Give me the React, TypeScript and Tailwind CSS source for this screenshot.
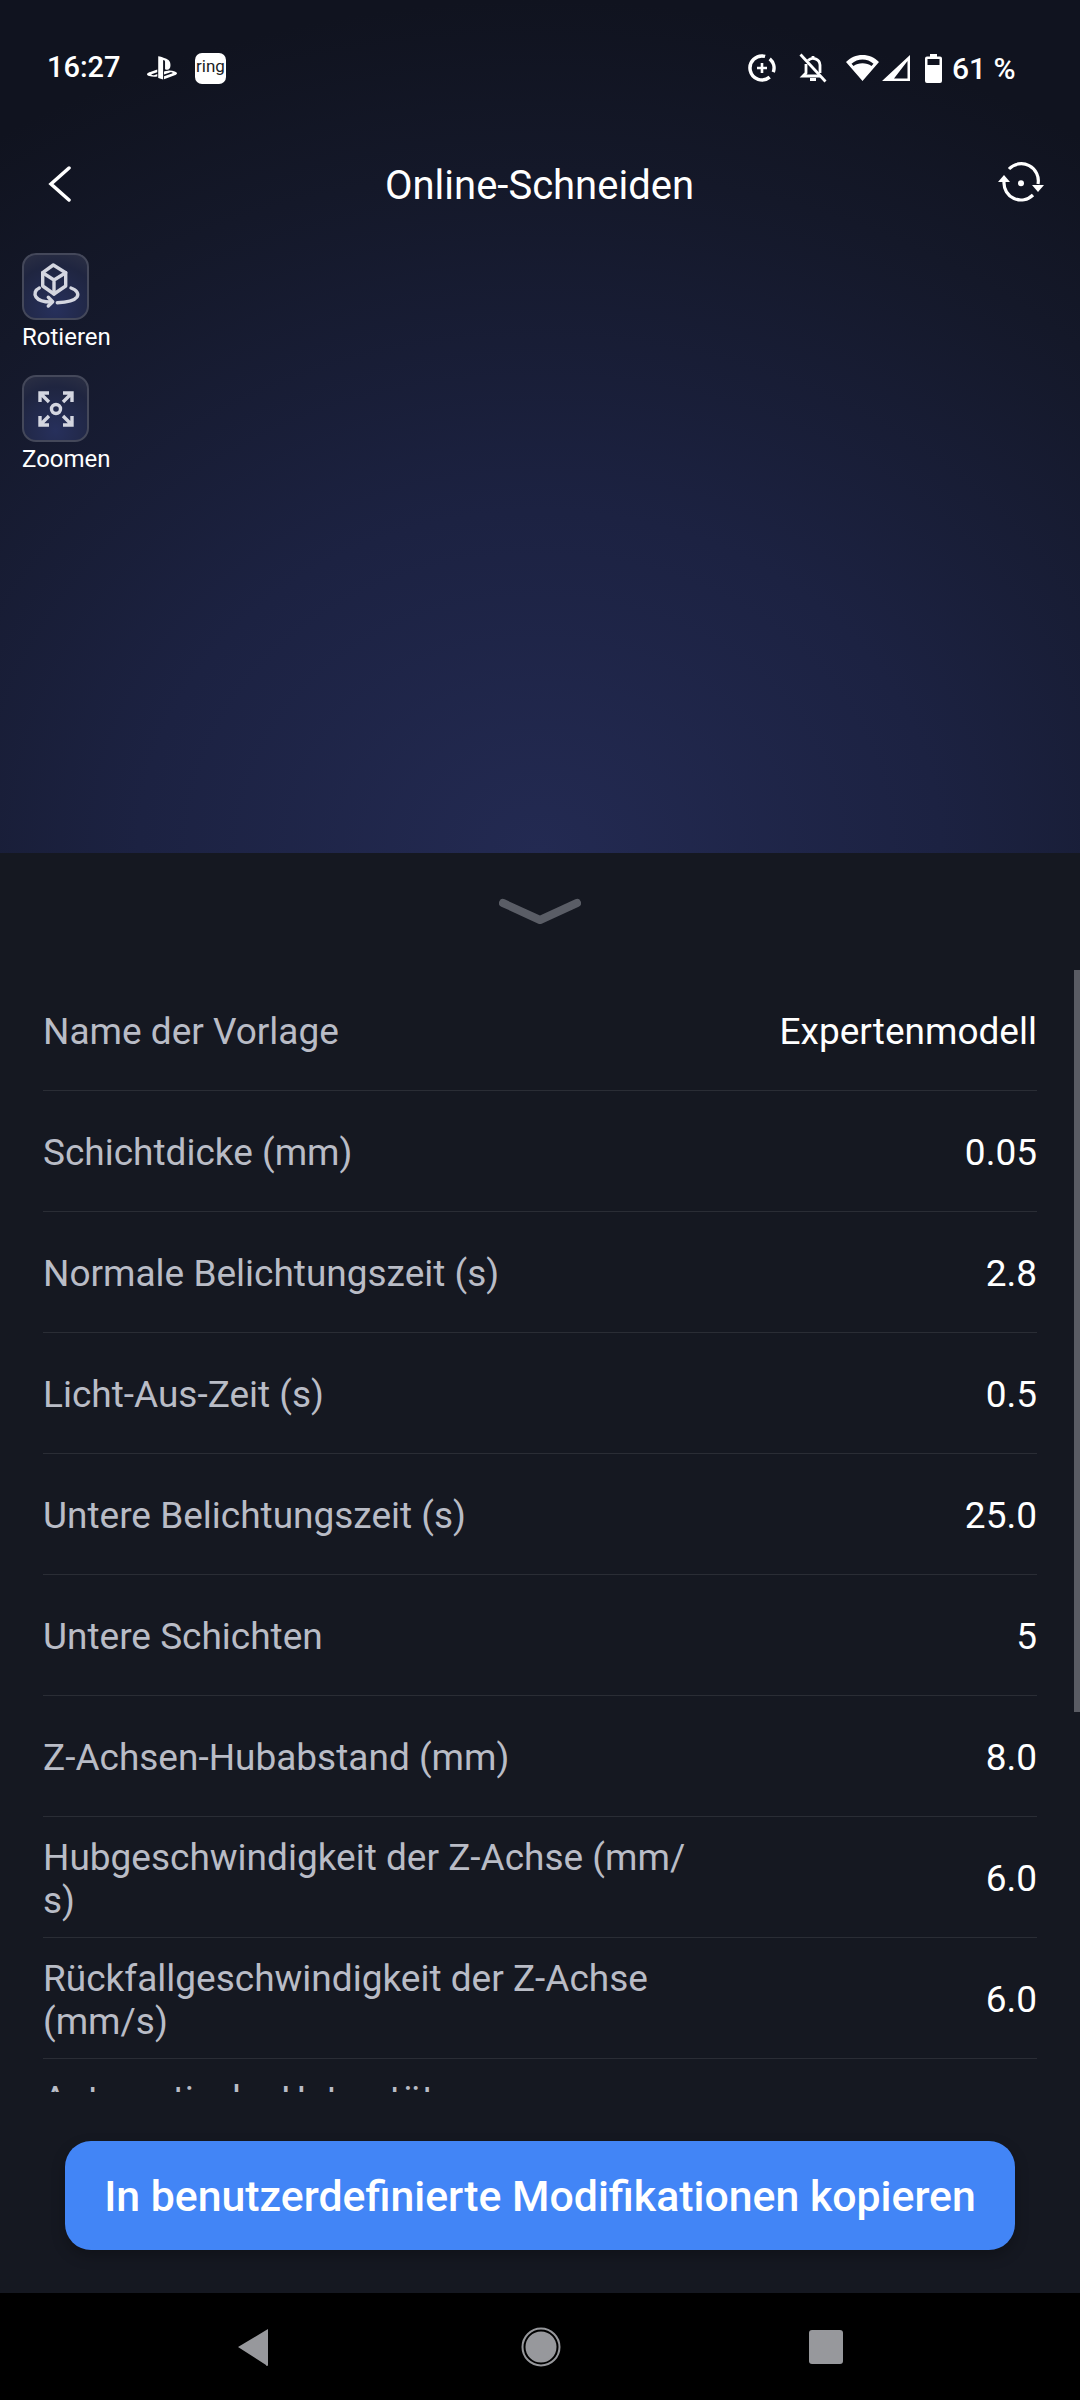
import { FaPlaystation } from 'react-icons/fa';

const ROWS = [
  { label: 'Name der Vorlage', value: 'Expertenmodell' },
  { label: 'Schichtdicke (mm)', value: '0.05' },
  { label: 'Normale Belichtungszeit (s)', value: '2.8' },
  { label: 'Licht-Aus-Zeit (s)', value: '0.5' },
  { label: 'Untere Belichtungszeit (s)', value: '25.0' },
  { label: 'Untere Schichten', value: '5' },
  { label: 'Z-Achsen-Hubabstand (mm)', value: '8.0' },
  { label: 'Hubgeschwindigkeit der Z-Achse (mm/\u200Bs)', value: '6.0' },
  { label: 'Rückfallgeschwindigkeit der Z-Achse (mm/s)', value: '6.0' },
  { label: 'Automatische Unterstützung\ngenerieren', value: '' },
];

function StatusBar() {
  return (
    <div className="h-[136px] pl-[47px] pr-[67px] flex items-center text-white">
      <span className="text-[29px] font-medium w-[100px]">16:27</span>
      <FaPlaystation className="w-[30px] h-[30px]" />
      <div className="ml-[18px] w-[31px] h-[31px] rounded-[7px] bg-white flex items-center justify-center text-[#1a1c24] text-[17px] leading-none pb-[3px]">
        ring
      </div>
      <div className="flex-1" />
      <svg width="28" height="28" viewBox="0 0 28 28" fill="none" stroke="white" strokeWidth="3.5">
        <path d="M17.100 2.400A12 12 0 1 0 21.700 23.200" />
        <path d="M21.700 4.800A12 12 0 0 1 25.300 18.100" />
        <path d="M14 9v10M9 14h10" strokeWidth="2.6" />
      </svg>
      <svg className="ml-[23px]" width="28" height="30" viewBox="0 0 28 30" fill="none" stroke="white" strokeWidth="2.8">
        <path d="M9 7.500A7 7 0 0 1 21 12v8M7 11v9l-3 3h17" />
        <path d="M11 26.500h6M14 3v2.500" />
        <path d="M1.500 1.500l25 27" />
      </svg>
      <svg className="ml-[19px]" width="33" height="26" viewBox="0 0 33 26" fill="white">
        <path fillRule="evenodd" d="M16.500 0C10 0 4.500 2.500 0 7l16.500 19L33 7C28.500 2.500 23 0 16.500 0Zm0 4.500c-4 0-8 1.400-11 4.300l2 2.300c2.500-1.800 5.600-2.800 9-2.800s6.500 1 9 2.800l2-2.300c-3-2.900-7-4.300-11-4.300Z" />
      </svg>
      <svg className="ml-[3px]" width="28" height="26" viewBox="0 0 28 26" fill="white">
        <path fillRule="evenodd" d="M28 0v26H0ZM25.500 6 12 23.500h13.500Z" />
      </svg>
      <svg className="ml-[15px]" width="17" height="29" viewBox="0 0 17 29" fill="white">
        <path fillRule="evenodd" d="M5 0h7v2.500h3A2 2 0 0 1 17 4.500V27a2 2 0 0 1-2 2H2a2 2 0 0 1-2-2V4.500a2 2 0 0 1 2-2h3ZM2.500 5v6h12V5Z" />
      </svg>
      <span className="ml-[10px] text-[30px] font-medium w-[61px] whitespace-nowrap">61 %</span>
    </div>
  );
}

function ToolButton({ label, children }: { label: string; children: React.ReactNode }) {
  return (
    <div className="flex flex-col items-start">
      <div className="w-[67px] h-[67px] rounded-[14px] border-2 border-[#44485a] bg-[radial-gradient(circle_at_50%_85%,#27305c,#1f2540_70%,#2c3044)] flex items-center justify-center">
        {children}
      </div>
      <span className="text-[24px] leading-[32px] mt-[1px] text-white">{label}</span>
    </div>
  );
}

export default function App() {
  return (
    <div className="w-[1080px] h-[2400px] flex flex-col overflow-hidden font-['Roboto',sans-serif]">
      <div className="h-[853px] bg-[radial-gradient(ellipse_1000px_853px_at_50%_100%,#232a52_0%,#1c2242_40%,#141829_80%,#10131f_100%)]">
        <StatusBar />
        <div className="h-[96px] flex items-center justify-between pl-[48px] pr-[27px] text-white">
          <svg width="24" height="36" viewBox="0 0 24 36" fill="none" stroke="white" strokeWidth="3.5" strokeLinecap="round">
            <path d="M21 2 3 18l18 16" />
          </svg>
          <span className="text-[40px] ml-[18px] pt-[3px]">Online-Schneiden</span>
          <svg width="64" height="60" viewBox="0 0 64 60" fill="none" stroke="white" strokeWidth="3.2">
            <path d="M20 15A17 17 0 0 1 49 30" />
            <path d="M44 41A17 17 0 0 1 15 28" />
            <path d="M43 31h12l-6 7Z" fill="white" stroke="none" />
            <path d="M9 28h12l-6-7Z" fill="white" stroke="none" />
            <circle cx="32" cy="29.300" r="3" fill="white" stroke="none" />
          </svg>
        </div>
        <div className="pt-[21px] pl-[22px] flex flex-col gap-[22px]">
          <ToolButton label="Rotieren">
            <svg width="63" height="63" viewBox="4 5 63 63" fill="none" stroke="#d4d6e0" strokeWidth="3.4" strokeLinejoin="round" strokeLinecap="round">
              <path d="M33.300 15 45.700 22.700V36L34 44 22.700 36V22.700Z" />
              <path d="M22.700 22.700 34 30 45.700 22.700M34 30V44" />
              <path d="M19.300 38C15 40 14 44 16 47c2 3 8 5 15 5" />
              <path d="M28.300 47.300 32.700 51.700 28.300 56" />
              <path d="M37.300 52.700C46 52.500 54 51 57 47c2-3 0-7-6-9" />
            </svg>
          </ToolButton>
          <ToolButton label="Zoomen">
            <svg width="38" height="38" viewBox="0 0 38 38" fill="none" stroke="#d4d6e0" strokeWidth="3.4">
              <circle cx="19" cy="19" r="4.5" />
              <path d="M3 12V3h9M3 3l9 9M26 3h9v9M35 3l-9 9M3 26v9h9M3 35l9-9M35 26v9h-9M35 35l-9-9" />
            </svg>
          </ToolButton>
        </div>
      </div>

      <div className="h-[1440px] bg-[#151821] flex flex-col">
        <div className="h-[117px] flex justify-center pt-[45px]">
          <svg width="82" height="28" viewBox="0 0 82 28" fill="none" stroke="#5a5d66" strokeWidth="8" strokeLinecap="round" strokeLinejoin="round">
            <path d="M4 5 41 22 78 5" />
          </svg>
        </div>

        <div className="relative h-[1122px] overflow-hidden">
          <div className="px-[43px]">
            {ROWS.map((row) => (
              <div key={row.label} className="h-[121px] border-b border-[#2a2d35] flex items-center justify-between">
                <span className="w-[650px] text-[37px] leading-[43px] pt-[3px] text-[#b9bcc6] whitespace-pre-line">{row.label}</span>
                <span className="text-[37px] leading-[43px] pt-[3px] text-white">{row.value}</span>
              </div>
            ))}
          </div>
          <div className="absolute top-0 right-0 w-[6px] h-[742px] bg-[#5a5c64]" />
        </div>

        <div className="flex-1 pt-[49px] px-[65px]">
          <button className="w-[950px] h-[109px] pt-[2px] rounded-[26px] bg-[#4285f6] text-white text-[42.8px] font-medium shadow-[0_6px_14px_rgba(0,0,0,0.25)]">
            In benutzerdefinierte Modifikationen kopieren
          </button>
        </div>
      </div>

      <div className="h-[107px] bg-black flex items-center justify-center">
        <svg width="32" height="38" viewBox="0 0 32 38" fill="#97989c">
          <path d="M31 1v36a1 1 0 0 1-2 0L1 19Z" />
        </svg>
        <svg className="ml-[252px]" width="40" height="40" viewBox="0 0 40 40" fill="#97989c" stroke="#97989c">
          <circle cx="20" cy="20" r="15.5" stroke="none" />
          <circle cx="20" cy="20" r="18.5" fill="none" strokeWidth="2" />
        </svg>
        <div className="ml-[248px] w-[34px] h-[34px] rounded-[3px] bg-[#97989c]" />
      </div>
    </div>
  );
}
